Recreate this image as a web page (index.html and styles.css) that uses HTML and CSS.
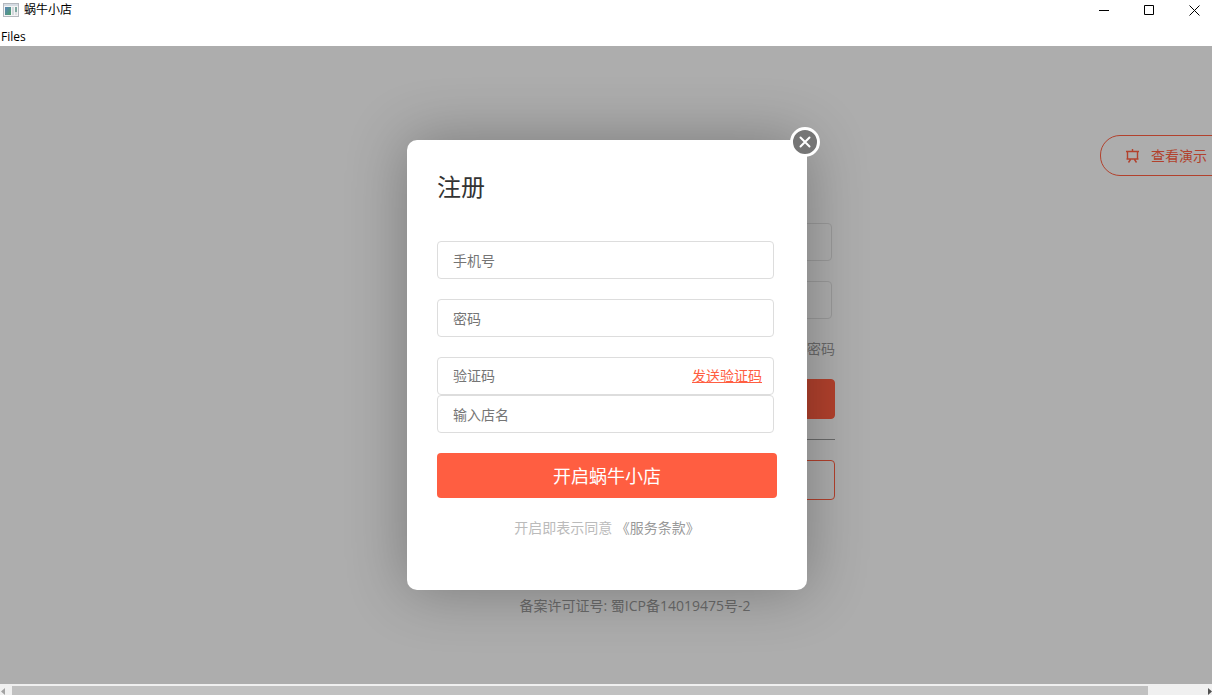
FILE: index.html
```html
<!DOCTYPE html>
<html lang="zh-CN">
<head>
<meta charset="utf-8">
<title>蜗牛小店</title>
<link rel="stylesheet" href="styles.css">
</head>
<body>
<div class="window">
  <header class="titlebar">
    <svg class="app-icon" width="16" height="14" viewBox="0 0 16 14" aria-hidden="true">
      <defs>
        <linearGradient id="pane" x1="0" y1="0" x2="1" y2="1">
          <stop offset="0" stop-color="#5a83b8"/>
          <stop offset="1" stop-color="#4fa06c"/>
        </linearGradient>
      </defs>
      <rect x="0.5" y="0.5" width="15" height="13" fill="#f4f4f4" stroke="#b4b8be"/>
      <rect x="1" y="1" width="14" height="2" fill="#d5dbe2"/>
      <rect x="2" y="4" width="6" height="8" fill="url(#pane)"/>
      <rect x="9" y="4" width="2" height="8" fill="#d3d8dc"/>
      <rect x="12" y="4" width="2" height="5" fill="#7fa8a0"/>
      <rect x="12" y="9" width="2" height="3" fill="#dcdfe2"/>
    </svg>
    <span class="app-name">蜗牛小店</span>
    <div class="window-controls">
      <button class="control" type="button" aria-label="最小化">
        <svg width="11" height="11" viewBox="0 0 11 11"><path d="M0 5.5h10" stroke="#000"/></svg>
      </button>
      <button class="control" type="button" aria-label="最大化">
        <svg width="11" height="11" viewBox="0 0 11 11"><path d="M.5 .5h9v9h-9z" fill="none" stroke="#000"/></svg>
      </button>
      <button class="control" type="button" aria-label="关闭窗口">
        <svg width="11" height="11" viewBox="0 0 11 11"><path d="M.5 .5l10 10M10.500 .5l-10 10" stroke="#000"/></svg>
      </button>
    </div>
  </header>
  <nav class="menubar"><button class="menu" type="button">Files</button></nav>

  <main class="viewport">
    <div class="page">
      <a class="demo" href="#">
        <svg width="15" height="14" viewBox="0 0 15 14" fill="none" stroke="currentColor" stroke-width="1.400" aria-hidden="true">
          <path d="M7.500 0v2M1 2.500h13M2.500 2.500v7.500h10v-7.500M1.500 10h12M5.500 10.500l-2 3M9.500 10.500l2 3"/>
        </svg>
        <span>查看演示</span>
      </a>
      <form class="login">
        <input class="field" type="tel" aria-label="登录手机号">
        <input class="field" type="password" aria-label="登录密码">
        <a class="forgot" href="#">忘记密码</a>
        <button class="login-button" type="button" aria-label="登录"></button>
        <hr class="divider">
        <button class="login-button outline" type="button" aria-label="注册新店"></button>
      </form>
      <footer class="license">备案许可证号: 蜀ICP备14019475号-2</footer>
    </div>

    <div class="overlay">
      <section class="modal" role="dialog" aria-labelledby="modal-title">
        <button class="close" type="button" aria-label="关闭">
          <svg width="12" height="12" viewBox="0 0 12 12"><path d="M1.500 1.500l9 9M10.500 1.500l-9 9" stroke="#fff" stroke-width="2" stroke-linecap="round"/></svg>
        </button>
        <h1 class="title" id="modal-title">注册</h1>
        <form class="register">
          <input class="field" type="tel" placeholder="手机号" aria-label="手机号">
          <input class="field" type="password" placeholder="密码" aria-label="密码">
          <div class="joined">
            <div class="field code">
              <input class="code-input" type="text" placeholder="验证码" aria-label="验证码">
              <a class="send" href="#">发送验证码</a>
            </div>
            <input class="field" type="text" placeholder="输入店名" aria-label="输入店名">
          </div>
          <button class="submit" type="button">开启蜗牛小店</button>
          <p class="terms">开启即表示同意 <a class="terms-link" href="#">《服务条款》</a></p>
        </form>
      </section>
    </div>
  </main>

  <div class="scrollbar" aria-hidden="true">
    <svg class="arrow" width="12" height="9" viewBox="0 0 12 9"><path d="M5 2v7l-4-3.500z" fill="#a3a3a3"/></svg>
    <div class="thumb"></div>
    <svg class="arrow" width="12" height="9" viewBox="0 0 12 9"><path d="M8 2v7l4-3.500z" fill="#505050"/></svg>
  </div>
</div>
</body>
</html>
```
FILE: styles.css
```css
* {
  box-sizing: border-box;
}

body {
  margin: 0;
  font-family: "Open Sans", "Noto Sans CJK SC", sans-serif;
  font-size: 14px;
  line-height: 20px;
  color: #333;
}

button,
input {
  margin: 0;
  font: inherit;
}

.window {
  display: flex;
  flex-direction: column;
  height: 100vh;
  overflow: hidden;
  background: #fff;
}

/* Window frame */
.titlebar {
  display: flex;
  align-items: center;
  height: 20px;
  padding-left: 3px;
  font-size: 12px;
  color: #000;
}

.app-name {
  margin-left: 5px;
}

.window-controls {
  display: flex;
  margin-left: auto;
}

.control {
  display: flex;
  align-items: center;
  justify-content: center;
  width: 45px;
  height: 20px;
  padding: 0 0 0 10px;
  border: 0;
  background: none;
}

.menubar {
  height: 26px;
  padding: 8px 1px 0;
}

.menu {
  display: block;
  padding: 0;
  border: 0;
  background: none;
  font-size: 12px;
  line-height: 18px;
  color: #000;
}

/* Page behind the dialog */
.viewport {
  position: relative;
  flex: 1;
  min-height: 0;
  overflow: hidden;
}

.page {
  display: flex;
  flex-direction: column;
  align-items: center;
  min-width: 1270px;
  min-height: 100%;
  padding-top: 89px;
  background: #f8f8f8;
}

.demo {
  display: flex;
  align-items: center;
  align-self: flex-end;
  gap: 11px;
  width: 170px;
  height: 41px;
  padding-left: 24px;
  border: 1px solid #ff5e41;
  border-radius: 20px 0 0 20px;
  color: #ff5e41;
  text-decoration: none;
}

.login {
  display: flex;
  flex-direction: column;
  width: 400px;
  margin-top: 47px;
}

.field {
  width: calc(100% - 3px);
  height: 38px;
  padding: 0 15px;
  border: 1px solid #ddd;
  border-radius: 4px;
  background: transparent;
  color: #333;
}

.login .field {
  margin-bottom: 20px;
}

.forgot {
  align-self: flex-end;
  margin-bottom: 20px;
  color: #999;
  text-decoration: none;
}

.login-button {
  height: 40px;
  border: 1px solid #ff5e41;
  border-radius: 4px;
  background: #ff5e41;
}

.login-button.outline {
  background: transparent;
}

.divider {
  width: 100%;
  margin: 20px 0;
  border: 0;
  border-top: 1px solid #999;
}

.license {
  margin-top: 96px;
  color: #999;
}

/* Register dialog */
.overlay {
  position: absolute;
  inset: 0;
  display: grid;
  place-items: center;
  padding-left: 2px;
  background: rgba(0, 0, 0, 0.3);
}

.modal {
  position: relative;
  width: 400px;
  padding: 30px 30px 52px;
  border-radius: 10px;
  background: #fff;
  box-shadow: 0 0 60px rgba(0, 0, 0, 0.3);
}

.close {
  position: absolute;
  top: -13px;
  right: -13px;
  display: flex;
  align-items: center;
  justify-content: center;
  width: 30px;
  height: 30px;
  padding: 0;
  border: 3px solid #fff;
  border-radius: 50%;
  background: #757575;
}

.title {
  margin: 0 0 37px;
  font-size: 24px;
  font-weight: 400;
  line-height: 34px;
}

.register {
  display: flex;
  flex-direction: column;
  gap: 20px;
}

.field::placeholder,
.code-input::placeholder {
  color: #757575;
  opacity: 1;
}

.joined {
  display: flex;
  flex-direction: column;
}

.code {
  display: flex;
  align-items: center;
  padding-right: 11px;
}

.code-input {
  flex: 1;
  min-width: 0;
  padding: 0;
  border: 0;
  background: none;
}

.send {
  color: #ff5e41;
}

.submit {
  height: 45px;
  padding: 0;
  border: 0;
  border-radius: 4px;
  background: #ff5e41;
  font-size: 18px;
  color: #fff;
}

.terms {
  margin: 0;
  text-align: center;
  color: #bbb;
}

.terms-link {
  color: #999;
  text-decoration: none;
}

/* Horizontal scrollbar */
.scrollbar {
  display: flex;
  height: 11px;
  padding-top: 2px;
  background: #f0f0f0;
}

.thumb {
  flex: 1;
  margin-right: 52px;
  background: #c1c1c1;
}
```
